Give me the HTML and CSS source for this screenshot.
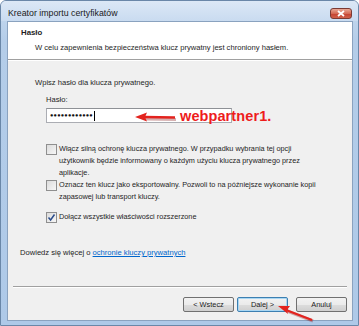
FILE: index.html
```html
<!DOCTYPE html>
<html lang="pl">
<head>
<meta charset="utf-8">
<link rel="stylesheet" href="styles.css">
</head>
<body>
<div class="window">
  <div class="titlebar">
    <span class="title">Kreator importu certyfikatów</span>
    <span class="close"><svg width="10" height="7" viewBox="0 0 10 7"><path d="M2 1 L8 6 M8 1 L2 6" stroke="#fff" stroke-width="1.8"/></svg></span>
  </div>
  <div class="client">
    <div class="header">
      <div class="h-title">Hasło</div>
      <div class="h-sub">W celu zapewnienia bezpieczeństwa klucz prywatny jest chroniony hasłem.</div>
    </div>
    <div class="content">
      <div class="intro">Wpisz hasło dla klucza prywatnego.</div>
      <div class="field">
        <div class="label">Hasło:</div>
        <div class="input">●●●●●●●●●●●●<span class="caret"></span></div>
        <svg class="arrow1" width="44" height="12" viewBox="0 0 44 12"><path d="M41 6.5 L10 6" stroke="#8a1a1a" stroke-opacity="0.35" stroke-width="3" transform="translate(1,1)"/><path d="M41 5.5 L10 5" stroke="#e3231e" stroke-width="2.6"/><path d="M1 5 L13 0.5 L11 5 L13 9.5 Z" fill="#e3231e"/></svg>
        <span class="note">webpartner1.</span>
      </div>
      <div class="options">
        <div class="opt">
          <span class="cb"></span>
          <span class="opt-text">Włącz silną ochronę klucza prywatnego. W przypadku wybrania tej opcji użytkownik będzie informowany o każdym użyciu klucza prywatnego przez aplikacje.</span>
        </div>
        <div class="opt">
          <span class="cb"></span>
          <span class="opt-text">Oznacz ten klucz jako eksportowalny. Pozwoli to na późniejsze wykonanie kopii zapasowej lub transport kluczy.</span>
        </div>
        <div class="opt opt-last">
          <span class="cb checked"><svg width="9" height="9" viewBox="0 0 9 9"><path d="M1.5 4.5 L3.6 7 L7.5 1.5" stroke="#2b4d8c" stroke-width="1.5" fill="none"/></svg></span>
          <span class="opt-text">Dołącz wszystkie właściwości rozszerzone</span>
        </div>
      </div>
      <div class="more">Dowiedz się więcej o <a class="link">ochronie kluczy prywatnych</a></div>
    </div>
    <div class="footer">
      <div class="sep"></div>
      <div class="buttons">
        <span class="btn">&lt; Wstecz</span>
        <span class="btn default">Dalej &gt;</span>
        <span class="btn cancel">Anuluj</span>
      </div>
      <svg class="arrow2" width="40" height="20" viewBox="0 0 40 20"><path d="M36 17 L10 7" stroke="#8a1a1a" stroke-opacity="0.35" stroke-width="3" transform="translate(1,1)"/><path d="M36 17 L10 7" stroke="#e3231e" stroke-width="2.4"/><path d="M2 3 L14 3 L11 7 L12 11 Z" fill="#e3231e"/></svg>
    </div>
  </div>
</div>
</body>
</html>
```

FILE: styles.css
```css
html, body {
  margin: 0;
  padding: 0;
  background: #ffffff;
}
.window {
  width: 359px;
  height: 326px;
  box-sizing: border-box;
  background: linear-gradient(#c9dbef, #b4cde9 40px, #aec9e8);
  border: 1px solid #6a87a8;
  border-radius: 6px 6px 0 0;
  padding: 0 5px 4px 6px;
  display: flex;
  flex-direction: column;
  font-family: "Liberation Sans", Arial, sans-serif;
  color: #1e1e1e;
}
.titlebar {
  height: 20px;
  flex: none;
  display: flex;
  align-items: center;
  justify-content: space-between;
  background: linear-gradient(#dce8f6, #c9dbf0);
  margin: 0 -5px 0 -6px;
  padding: 0 6px 0 7px;
  border-radius: 5px 5px 0 0;
}
.title {
  font-size: 8.8px;
  color: #1a1a1a;
  padding-top: 4px;
}
.close {
  width: 22px;
  height: 11px;
  margin-top: 5px;
  box-sizing: border-box;
  border: 1px solid #7b3a33;
  border-radius: 3px;
  background: linear-gradient(#e9a996, #d56a55 50%, #c3402f 51%, #d0604a);
  display: flex;
  align-items: center;
  justify-content: center;
}
.client {
  flex: 1;
  background: #f0f0f0;
  border: 1px solid #8aa2bf;
  display: flex;
  flex-direction: column;
}
.header {
  height: 38px;
  background: #ffffff;
  border-bottom: 1px solid #a0a0a0;
  box-shadow: 0 1px 0 #ffffff;
  box-sizing: border-box;
  padding: 6px 0 0 13px;
  flex: none;
}
.h-title {
  font-size: 7.8px;
  font-weight: bold;
  line-height: 10px;
}
.h-sub {
  font-size: 7.6px;
  line-height: 10px;
  margin: 5px 0 0 14px;
}
.content {
  flex: 1;
  padding: 18px 0 0 27px;
  font-size: 7.6px;
}
.intro {
  line-height: 10px;
}
.field {
  position: relative;
  margin: 7px 0 0 11px;
}
.label {
  line-height: 10px;
}
.input {
  margin-top: 3px;
  width: 186px;
  height: 15px;
  box-sizing: border-box;
  background: #ffffff;
  border: 1px solid #abadb3;
  border-top-color: #8e9196;
  font-size: 5.6px;
  line-height: 13px;
  padding-left: 3px;
  letter-spacing: 0.2px;
  color: #111;
  display: flex;
  align-items: center;
}
.caret {
  display: inline-block;
  width: 1px;
  height: 10px;
  background: #000;
  margin-left: 1px;
}
.arrow1 {
  position: absolute;
  left: 88px;
  top: 17px;
}
.note {
  position: absolute;
  left: 134px;
  top: 13px;
  font-size: 14.5px;
  font-weight: bold;
  color: #ee1c1c;
  line-height: 17px;
  letter-spacing: 0.1px;
}
.options {
  margin: 20px 0 0 11px;
  width: 283px;
}
.opt {
  display: flex;
  align-items: flex-start;
}
.opt-last {
  margin-top: 8px;
}
.cb {
  flex: none;
  width: 11px;
  height: 11px;
  box-sizing: border-box;
  border: 1px solid #8f8f8f;
  background: linear-gradient(135deg, #dcdcdc, #f7f7f7);
  margin-right: 2px;
  margin-top: 1px;
  display: flex;
  align-items: center;
  justify-content: center;
}
.opt-text {
  font-size: 7.3px;
  line-height: 12px;
}
.more {
  margin: 25px 0 0 -15px;
  line-height: 10px;
}
.link {
  color: #0066cc;
  text-decoration: underline;
}
.footer {
  flex: none;
  height: 34px;
  position: relative;
  padding: 0 5px;
}
.sep {
  height: 1px;
  background: #a0a0a0;
  box-shadow: 0 1px 0 #ffffff;
}
.buttons {
  display: flex;
  justify-content: flex-end;
  gap: 3px;
  margin-top: 10px;
}
.btn {
  width: 51px;
  height: 15px;
  box-sizing: border-box;
  border: 1px solid #707070;
  border-radius: 2px;
  background: linear-gradient(#f2f2f2, #ebebeb 50%, #dddddd 51%, #cfcfcf);
  font-size: 7.4px;
  display: flex;
  align-items: center;
  justify-content: center;
  color: #1a1a1a;
}
.btn.default {
  border-color: #3c7fb1;
  box-shadow: inset 0 0 0 1px #a9d7f3;
}
.btn.cancel {
  margin-left: 5px;
}
.arrow2 {
  position: absolute;
  left: 268px;
  top: 17px;
}
```
